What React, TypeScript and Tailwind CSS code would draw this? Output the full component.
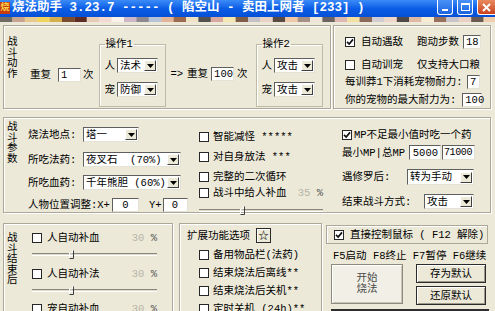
import type { ReactNode } from "react";

const strip = [
  "#6f6a64", "#c8a38e", "#e6c98f", "#f1d45f", "#d6ae4c", "#7b4b2d", "#5c2b23", "#e6ccb7",
  "#f4d8d2", "#faf3ec", "#cbb7c8", "#8e8990", "#b6c2d8", "#e3b598", "#9c6a4f", "#f0e3c4",
  "#545050", "#d9a9a0", "#f5e7b0", "#7f5e48", "#c4c0c8", "#e9d2c4", "#5a4a44", "#f2c9a6",
  "#a88f86", "#eee4d8", "#6b6262", "#dcb8b0", "#f3dfa0", "#8a6a58", "#d2cdd4", "#f0d6c9",
  "#4f4848", "#e0b9a2", "#f7ecd2", "#96705c", "#c9c3cc", "#ecd0c2", "#6a5a52", "#f1cfae",
];

function Check({ on }: { on?: boolean }) {
  return (
    <span className="flex h-[10px] w-[10px] shrink-0 items-center justify-center border border-[#262626] bg-white">
      {on && (
        <svg width="8" height="8" viewBox="0 0 8 8">
          <path d="M1 3.8 L3.2 6 L7 1.4" fill="none" stroke="#111" strokeWidth="1.7" />
        </svg>
      )}
    </span>
  );
}

function Box({ v, className = "" }: { v: string; className?: string }) {
  return (
    <span
      className={`flex h-[14px] shrink-0 items-center border border-t-[#5f5f5f] border-l-[#5f5f5f] border-r-[#e4e2d6] border-b-[#e4e2d6] bg-white px-[2px] ${className}`}
    >
      {v}
    </span>
  );
}

function Drop({ v, className = "" }: { v: string; className?: string }) {
  return (
    <span
      className={`flex h-[15px] shrink-0 items-center border border-t-[#5f5f5f] border-l-[#5f5f5f] border-r-[#e4e2d6] border-b-[#e4e2d6] bg-white ${className}`}
    >
      <span className="flex-1 overflow-hidden whitespace-pre pl-[2px]">{v}</span>
      <span className="mr-[1px] flex h-[11px] w-[12px] items-center justify-center border border-t-white border-l-white border-r-[#404040] border-b-[#404040] bg-[#ece9d8]">
        <svg width="7" height="4" viewBox="0 0 7 4">
          <path d="M0 0 H7 L3.5 4 Z" fill="#000" />
        </svg>
      </span>
    </span>
  );
}

function VLabel({ text, className = "" }: { text: string; className?: string }) {
  return (
    <div className={`flex w-[11px] shrink-0 flex-col leading-[10.5px] ${className}`}>
      {[...text].map((c, i) => (
        <span key={i}>{c}</span>
      ))}
    </div>
  );
}

function Slider({ className = "", pos }: { className?: string; pos: number }) {
  return (
    <div className={`relative h-[9px] ${className}`}>
      <div className="absolute left-0 right-0 top-[3px] h-[3px] border-t border-b border-t-[#8a877a] border-b-white bg-[#dedbcc]" />
      <svg className="absolute top-0" style={{ left: pos }} width="5" height="9" viewBox="0 0 5 9">
        <path d="M0.5 8.5 V3 H3.5 V0.5" fill="none" stroke="#ffffff" strokeWidth="1" />
        <path d="M0.5 8.5 H4.5 V0.5" fill="none" stroke="#3c3c3c" strokeWidth="1" />
      </svg>
    </div>
  );
}

function Panel({ className = "", children }: { className?: string; children: ReactNode }) {
  return (
    <div className={`shrink-0 border border-[#aca899] shadow-[inset_1px_1px_0_#ffffff,1px_1px_0_#ffffff] ${className}`}>
      {children}
    </div>
  );
}

function Group({ title, rows }: { title: string; rows: [string, string][] }) {
  return (
    <fieldset className="mt-[12px] h-[69px] w-[67px] shrink-0 border border-[#bdbaa8] shadow-[inset_1px_1px_0_#ffffff]">
      <legend className="ml-[5px] px-[1px] leading-[12px]">{title}</legend>
      <div className="flex flex-col gap-[9px] pl-[5px] pt-[8px]">
        {rows.map(([a, b]) => (
          <div key={a} className="flex items-center">
            <span>{a}</span>
            <Drop v={b} className="ml-[2px] w-[41px]" />
          </div>
        ))}
      </div>
    </fieldset>
  );
}

function Pct({ v }: { v: string }) {
  return (
    <span className="ml-auto">
      <span className="text-[#b8b5a8]">{v}</span>
      <span className="text-[#555]"> %</span>
    </span>
  );
}

export default function App() {
  return (
    <div className="h-[311px] w-[495px] overflow-hidden bg-[#ece9d8] font-['Liberation_Mono','Noto_Sans_CJK_SC',monospace] text-[10.5px] leading-[12px] text-black">
      {/* title bar */}
      <div className="flex h-[17px] items-start bg-gradient-to-b from-[#3b8bf8] via-[#0b5de6] to-[#0450d6]">
        <span className="mt-[2px] flex h-[12px] w-[10px] items-center justify-center bg-[#c93c12] text-[9px] font-bold leading-none text-[#f7d64a]">
          烧
        </span>
        <span className="ml-[2px] mt-[1px] whitespace-pre text-[12.5px] font-bold leading-[15px] text-white">
          烧法助手 3.23.7 ----- ( 陷空山 - 卖田上网者 [233] )
        </span>
        <div className="ml-auto flex gap-[4px]">
          <span className="flex h-[15px] w-[16px] items-end justify-center rounded-b-[3px] border border-t-0 border-white bg-gradient-to-b from-[#4a92f7] to-[#1d62e0] pb-[3px]">
            <span className="h-[2px] w-[6px] bg-white" />
          </span>
          <span className="flex h-[15px] w-[16px] items-center justify-center rounded-b-[3px] border border-t-0 border-white bg-gradient-to-b from-[#4a92f7] to-[#1d62e0]">
            <span className="h-[8px] w-[9px] border border-t-2 border-white" />
          </span>
          <span className="flex h-[15px] w-[18px] items-center justify-center rounded-bl-[3px] border border-t-0 border-r-0 border-white bg-gradient-to-b from-[#e98a5e] to-[#c9401c]">
            <svg width="9" height="9" viewBox="0 0 9 9">
              <path d="M1 1 L8 8 M8 1 L1 8" stroke="#fff" strokeWidth="2" />
            </svg>
          </span>
        </div>
      </div>
      <svg width="495" height="5" className="block">
        {strip.map((c, i) => (
          <rect key={i} x={i * 12.4} y="0" width="12.5" height="5" fill={c} />
        ))}
      </svg>

      {/* top row */}
      <div className="mt-[3px] flex pl-[3px]">
        <Panel className="flex h-[84px] w-[328px] items-start">
          <VLabel text="战斗动作" className="ml-[3px] mt-[11px]" />
          <div className="ml-[12px] mt-[42px] flex items-center">
            <span>重复</span>
            <Box v="1" className="ml-[7px] w-[23px]" />
            <span className="ml-[2px]">次</span>
          </div>
          <div className="ml-[5px]">
            <Group title="操作1" rows={[["人", "法术"], ["宠", "防御"]]} />
          </div>
          <div className="ml-[5px] mt-[41px] flex items-center">
            <span>=&gt;</span>
            <span className="ml-[4px]">重复</span>
            <Box v="100" className="ml-[3px] w-[23px]" />
            <span className="ml-[3px]">次</span>
          </div>
          <div className="ml-[8px]">
            <Group title="操作2" rows={[["人", "攻击"], ["宠", "攻击"]]} />
          </div>
        </Panel>
        <Panel className="ml-[2px] flex h-[84px] w-[158px] flex-col pl-[11px]">
          <div className="mt-[9px] flex h-[14px] items-center">
            <Check on />
            <span className="ml-[6px]">自动遇敌</span>
            <span className="ml-[14px]">跑动步数</span>
            <Box v="18" className="ml-[4px] w-[18px]" />
          </div>
          <div className="mt-[9px] flex h-[14px] items-center">
            <Check />
            <span className="ml-[6px]">自动训宠</span>
            <span className="ml-[14px]">仅支持大口粮</span>
          </div>
          <div className="mt-[3px] flex h-[13px] items-center">
            <span>每训莽1下消耗宠物耐力:</span>
            <Box v="7" className="ml-[4px] h-[13px] w-[13px] justify-center" />
          </div>
          <div className="mt-[5px] flex h-[14px] items-center">
            <span>你的宠物的最大耐力为:</span>
            <Box v="100" className="ml-[6px] w-[20px] px-0" />
          </div>
        </Panel>
      </div>

      {/* middle panel */}
      <div className="mt-[8px] pl-[3px]">
        <Panel className="flex h-[96px] w-[488px] items-start">
          <VLabel text="战斗参数" className="ml-[3px] mt-[4px]" />
          <div className="ml-[10px] flex w-[160px] shrink-0 flex-col">
            <div className="mt-[9px] flex items-center">
              <span className="w-[55px]">烧法地点:</span>
              <Drop v="塔一" className="w-[56px]" />
            </div>
            <div className="mt-[10px] flex items-center">
              <span className="w-[55px]">所吃法药:</span>
              <Drop v="夜叉石  (70%)" className="w-[98px]" />
            </div>
            <div className="mt-[8px] flex items-center">
              <span className="w-[55px]">所吃血药:</span>
              <Drop v="千年熊胆 (60%)" className="w-[98px]" />
            </div>
            <div className="mt-[8px] flex items-center">
              <span>人物位置调整:X+</span>
              <Box v="0" className="ml-[2px] w-[27px] justify-center" />
              <span className="ml-[10px]">Y+</span>
              <Box v="0" className="ml-[1px] w-[25px] justify-center" />
            </div>
          </div>
          <div className="ml-[11px] flex w-[124px] shrink-0 flex-col">
            <div className="mt-[12px] flex h-[14px] items-center">
              <Check />
              <span className="ml-[4px]">智能减怪 *****</span>
            </div>
            <div className="mt-[6px] flex h-[14px] items-center">
              <Check />
              <span className="ml-[4px]">对自身放法 ***</span>
            </div>
            <div className="mt-[6px] flex h-[14px] items-center">
              <Check />
              <span className="ml-[4px]">完整的二次循环</span>
            </div>
            <div className="mt-[2px] flex h-[14px] items-center">
              <Check />
              <span className="ml-[4px]">战斗中给人补血</span>
              <Pct v="35" />
            </div>
            <Slider className="mt-[6px]" pos={41} />
          </div>
          <div className="ml-[19px] flex w-[134px] shrink-0 flex-col">
            <div className="mt-[10px] flex h-[14px] items-center">
              <Check on />
              <span className="ml-[2px]">MP不足最小值时吃一个药</span>
            </div>
            <div className="mt-[3px] flex h-[15px] items-center">
              <span>最小MP|总MP</span>
              <Box v="5000" className="ml-[4px] h-[15px] w-[32px] justify-end px-[1px]" />
              <Box v="71000" className="ml-[1px] h-[15px] w-[33px] justify-end px-0 text-[10px] tracking-[-0.4px]" />
            </div>
            <div className="mt-[9px] flex items-center">
              <span className="w-[65px]">遇修罗后:</span>
              <Drop v="转为手动" className="h-[16px] w-[67px]" />
            </div>
            <div className="mt-[9px] flex items-center">
              <span className="w-[82px]">结束战斗方式:</span>
              <Drop v="攻击" className="w-[50px]" />
            </div>
          </div>
        </Panel>
      </div>

      {/* bottom row */}
      <div className="mt-[10px] flex items-start pl-[3px]">
        <Panel className="flex h-[100px] w-[170px] items-start">
          <VLabel text="战斗结束后" className="ml-[3px] mt-[9px]" />
          <div className="ml-[14px] flex w-[125px] flex-col">
            <div className="mt-[8px] flex h-[12px] items-center">
              <Check />
              <span className="ml-[5px]">人自动补血</span>
              <Pct v="30" />
            </div>
            <Slider className="mt-[6px]" pos={37} />
            <div className="mt-[9px] flex h-[12px] items-center">
              <Check />
              <span className="ml-[5px]">人自动补法</span>
              <Pct v="30" />
            </div>
            <Slider className="mt-[6px]" pos={37} />
            <div className="mt-[8px] flex h-[12px] items-center">
              <Check />
              <span className="ml-[5px]">宠自动补血</span>
              <Pct v="30" />
            </div>
          </div>
        </Panel>
        <Panel className="ml-[6px] flex h-[100px] w-[143px] flex-col">
          <div className="ml-[7px] mt-[4px] flex items-center">
            <span>扩展功能选项</span>
            <span className="ml-[6px] flex h-[15px] w-[15px] items-center justify-center border border-[#2a2a2a] shadow-[inset_1px_1px_0_#ffffff]">
              ☆
            </span>
          </div>
          <div className="ml-[19px] flex flex-col gap-[6px] pt-[6px]">
            {["备用物品栏(法药)", "结束烧法后离线**", "结束烧法后关机**", "定时关机 (24h)**"].map((t) => (
              <div key={t} className="flex h-[12px] items-center whitespace-pre">
                <Check />
                <span className="ml-[4px]">{t}</span>
              </div>
            ))}
          </div>
        </Panel>
        <div className="ml-[4px] flex w-[163px] flex-col">
          <div className="mt-[2px] flex h-[19px] w-[162px] items-center border border-[#aca899] pl-[7px] shadow-[inset_1px_1px_0_#ffffff]">
            <Check on />
            <span className="ml-[6px] whitespace-pre">直接控制鼠标 ( F12 解除)</span>
          </div>
          <div className="mt-[6px] whitespace-pre pl-[7px]">F5启动 F8终止 F7暂停 F6继续</div>
          <div className="mt-[2px] flex pl-[5px]">
            <span className="flex h-[40px] w-[72px] flex-col items-center justify-center border border-[#8d8a7e] bg-[#f1efe6] leading-[11px] text-[#4a4a4a] shadow-[inset_1px_1px_0_#ffffff,inset_-1px_-1px_0_#c9c6b8]">
              <span>开始</span>
              <span>烧法</span>
            </span>
            <div className="ml-[13px] flex flex-col gap-[3px]">
              <span className="flex h-[19px] w-[70px] items-center justify-center border border-[#2b2b2b] bg-[#ece9d8] shadow-[inset_1px_1px_0_#ffffff,inset_-1px_-1px_0_#9d9a8c]">
                存为默认
              </span>
              <span className="flex h-[19px] w-[70px] items-center justify-center border border-[#2b2b2b] bg-[#ece9d8] shadow-[inset_1px_1px_0_#ffffff,inset_-1px_-1px_0_#9d9a8c]">
                还原默认
              </span>
            </div>
          </div>
          <div className="ml-[5px] mt-[4px] h-[12px] w-[158px] border-2 border-[#2e2e2e] bg-[#d6d3c4]" />
        </div>
      </div>
    </div>
  );
}
